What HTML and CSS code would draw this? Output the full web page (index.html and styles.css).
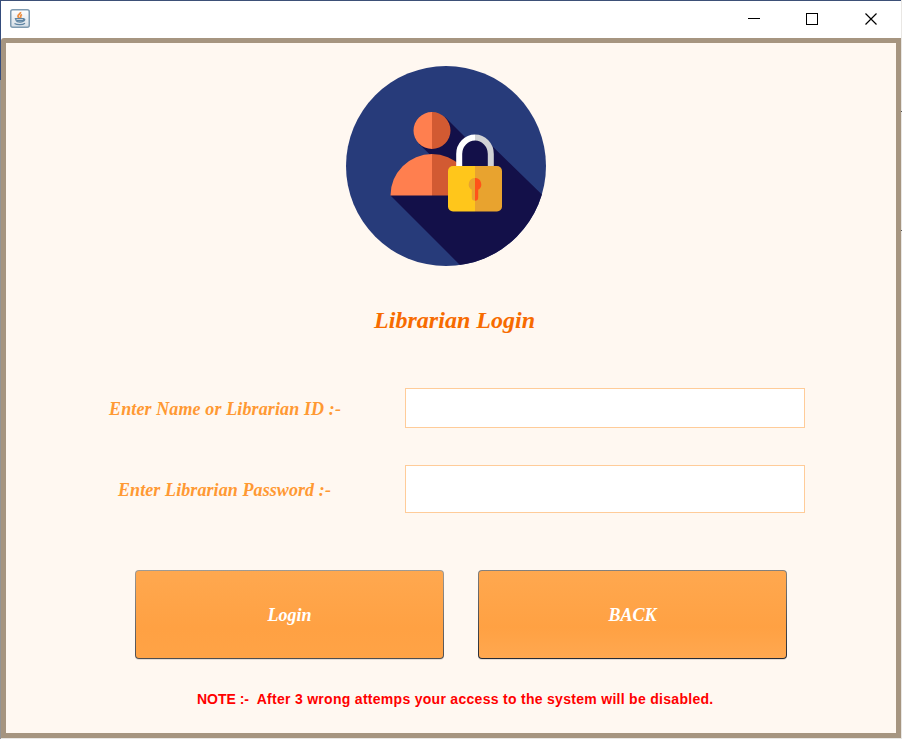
FILE: index.html
```html
<!DOCTYPE html>
<html lang="en">
<head>
<meta charset="utf-8">
<title>Librarian Login</title>
<link rel="stylesheet" href="styles.css">
</head>
<body>
<div class="window">
  <header class="titlebar">
    <svg class="app-icon" width="20" height="20" viewBox="0 0 20 20">
      <defs><linearGradient id="tile" x1="0" y1="0" x2="0" y2="1"><stop offset="0" stop-color="#fff"/><stop offset="1" stop-color="#d5dee6"/></linearGradient></defs>
      <rect x=".75" y=".75" width="18.5" height="17.5" rx="2" fill="url(#tile)" stroke="#7f9bb1" stroke-width="1.5"/>
      <path d="M10.500 3c.5 2-3 2.500-2.500 4.500.2 1 1.500 1.300 1.300 2M12 5.500c-2.500 1.200-.7 2.500-1.500 3.500" fill="none" stroke="#ee8f42" stroke-width="1.800"/>
      <path d="M5.500 9.700h8v1.800c0 2-6.500 2-7.200.3zM13.300 10.200c2-.7 2 1.600-.6 2M4.500 14.500c3 1.700 8 1.500 10.500-.3" fill="none" stroke="#5f85a3" stroke-width="1.300"/>
      <path d="M6.300 11h7v1.600H7z" fill="#5f85a3"/>
    </svg>
    <svg class="controls" width="130" height="14" viewBox="0 0 130 14" fill="none" stroke="#000" shape-rendering="crispEdges">
      <path d="M0 6.500h12"/>
      <rect x="58.500" y="1.500" width="11" height="11"/>
      <path d="M117.500 1.500l11 11M128.500 1.500l-11 11" shape-rendering="auto" stroke-width="1.200"/>
    </svg>
  </header>
  <main class="panel">
    <svg class="emblem" width="200" height="200" viewBox="0 0 200 200">
      <defs><clipPath id="disc"><circle cx="100" cy="100" r="100"/></clipPath></defs>
      <g clip-path="url(#disc)">
        <path fill="#273b7a" d="M0 0h200v200H0z"/>
        <path fill="#131049" d="M99 51l20 20 21 3 60 58.500V214h-71L44.500 129.500 100 104 73 78z"/>
      </g>
      <path fill="#ff7f4f" d="M86 46a18.500 18.500 0 0 0 0 37zM86 88a41.500 41.500 0 0 0-41.500 41.500H86z"/>
      <path fill="#d25a32" d="M86 46a18.500 18.500 0 0 1 0 37zM86 88a41.500 41.500 0 0 1 41.500 41.500H86z"/>
      <path fill="none" stroke="#fff" stroke-width="6" d="M113.200 102V88A15.800 16.500 0 0 1 129 71.500"/>
      <path fill="none" stroke="#d1d2d5" stroke-width="6" d="M129 71.500A15.800 16.500 0 0 1 144.800 88V102"/>
      <path fill="#ffc61b" d="M129 100h-22a5 5 0 0 0-5 5v35.500a5 5 0 0 0 5 5h22z"/>
      <path fill="#e8a32f" d="M129 100h22a5 5 0 0 1 5 5v35.500a5 5 0 0 1-5 5h-22z"/>
      <path fill="#e8a32f" d="M129 112a6.300 6.300 0 0 0-3.200 11.700v7.800a3.200 3.200 0 0 0 3.200 3.200z"/>
      <path fill="#ff5319" d="M129 112a6.300 6.300 0 0 1 3.200 11.700v7.800a3.200 3.200 0 0 1-3.200 3.200z"/>
    </svg>
    <h1 class="heading">Librarian Login</h1>
    <form class="form">
      <div class="field">
        <label class="label" for="user">Enter Name or Librarian ID :-</label>
        <input class="input" id="user" type="text">
      </div>
      <div class="field field-password">
        <label class="label label-password" for="pass">Enter Librarian Password :-</label>
        <input class="input input-password" id="pass" type="password">
      </div>
      <div class="actions">
        <button class="button" type="button">Login</button>
        <button class="button button-back" type="button">BACK</button>
      </div>
    </form>
    <p class="note"><span class="note-tag">NOTE :-&nbsp; </span>After 3 wrong attemps your access to the system will be disabled.</p>
  </main>
</div>
</body>
</html>
```
FILE: styles.css
```css
* { box-sizing: border-box; }
body {
  margin: 0;
  width: 902px;
  height: 739px;
  overflow: hidden;
  background:
    linear-gradient(#344c7c 80px, #949494 80px) 0 0 / 1px 100% no-repeat,
    linear-gradient(#555, #555) 100% 111px / 1px 1px no-repeat,
    linear-gradient(#555, #555) 100% 230px / 1px 1px no-repeat,
    #e9e7e4;
}
.window {
  height: 738px;
  margin: 0 1px;
  border-top: 1px solid #3d5077;
  background: #fff;
}
.titlebar {
  display: flex;
  justify-content: space-between;
  align-items: flex-start;
  height: 37px;
  padding: 8px 23px 0 9px;
}
.controls { margin-top: 3px; }
.panel {
  display: flex;
  flex-direction: column;
  height: 700px;
  padding-top: 23px;
  border: 5px solid #a69580;
  border-radius: 3px 0 0 0;
  background: #fff8f1;
}
.emblem { margin-left: 340px; flex: none; }
.heading {
  margin: 39px 0 0 368px;
  font: italic bold 24px/30px "Liberation Serif", serif;
  letter-spacing: .03px;
  color: #f76b00;
  white-space: nowrap;
}
.form { margin-top: 53px; }
.field {
  display: grid;
  grid-template-columns: 296px 400px;
  align-items: center;
  margin-left: 103px;
}
.label {
  padding-top: 1px;
  font: italic bold 18px/22px "Liberation Serif", serif;
  letter-spacing: .12px;
  color: #ff9933;
  white-space: nowrap;
}
.label-password { padding-left: 9px; letter-spacing: .09px; }
.input {
  width: 400px;
  height: 40px;
  padding: 0 6px;
  border: 1px solid #ffcc99;
  background: #fff;
  outline: 0;
}
.field-password { margin-top: 37px; }
.input-password { height: 48px; }
.actions {
  display: flex;
  gap: 34px;
  margin: 57px 0 0 129px;
}
.button {
  width: 309px;
  height: 89px;
  padding: 0;
  border: 1px solid transparent;
  border-radius: 4px;
  background: linear-gradient(#ffa84f, #ffa143 65%, #ffa346) padding-box, linear-gradient(#a09b94, #4d4d50) border-box;
  box-shadow: 0 1px #e5ddd6;
  font: italic bold 18px/22px "Liberation Serif", serif;
  color: #fff;
}
.button-back {
  background: linear-gradient(#ffa84f, #ffa143 65%, #ffa850) padding-box, linear-gradient(#85817d, #252a35) border-box;
}
.note {
  margin: 31px 0 0 191px;
  font: bold 14px/18px "Liberation Sans", sans-serif;
  letter-spacing: .29px;
  color: #f00;
  white-space: nowrap;
}
.note-tag { letter-spacing: -.03px; }
```
